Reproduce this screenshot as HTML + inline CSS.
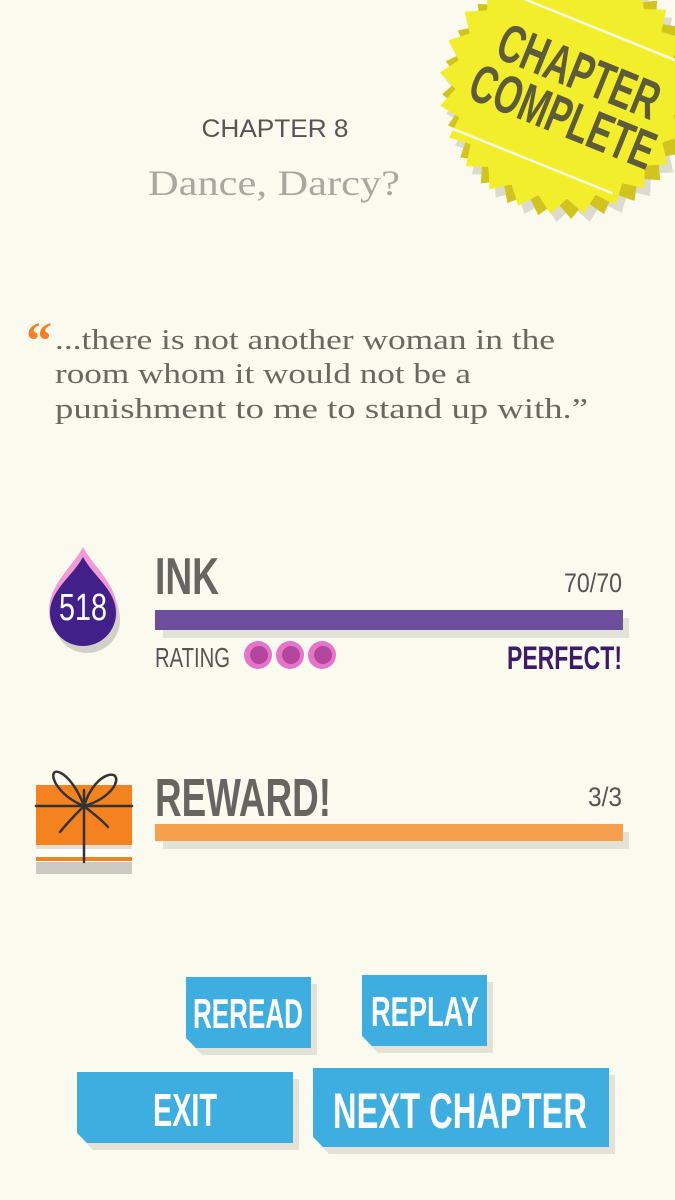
<!DOCTYPE html>
<html><head><meta charset="utf-8"><style>
html,body{margin:0;padding:0;background:#fbfaee;}
svg{display:block}
.c{font-family:"Liberation Sans Narrow","Liberation Sans",sans-serif;font-weight:bold}
.n{font-weight:normal}
.s{font-family:"Liberation Serif",serif}
</style></head><body>
<svg width="675" height="1200" viewBox="0 0 675 1200" xmlns="http://www.w3.org/2000/svg">
<rect width="675" height="1200" fill="#fbfaee"/>
<defs>
<g id="star"><circle cx="0" cy="0" r="111"/><polygon points="-15,-109 15,-109 0,-127"/></g>
<g id="spikes">
<use href="#star"/>
<use href="#star" transform="rotate(15)"/><use href="#star" transform="rotate(30)"/><use href="#star" transform="rotate(45)"/><use href="#star" transform="rotate(60)"/><use href="#star" transform="rotate(75)"/><use href="#star" transform="rotate(90)"/><use href="#star" transform="rotate(105)"/><use href="#star" transform="rotate(120)"/><use href="#star" transform="rotate(135)"/><use href="#star" transform="rotate(150)"/><use href="#star" transform="rotate(165)"/><use href="#star" transform="rotate(180)"/><use href="#star" transform="rotate(195)"/><use href="#star" transform="rotate(210)"/><use href="#star" transform="rotate(225)"/><use href="#star" transform="rotate(240)"/><use href="#star" transform="rotate(255)"/><use href="#star" transform="rotate(270)"/><use href="#star" transform="rotate(285)"/><use href="#star" transform="rotate(300)"/><use href="#star" transform="rotate(315)"/><use href="#star" transform="rotate(330)"/><use href="#star" transform="rotate(345)"/>
</g>
</defs>
<!-- badge -->
<g transform="translate(572,96) rotate(22)" fill="#dcdbd0"><use href="#spikes"/></g>
<g transform="translate(569,92) rotate(29)" fill="#d2c420"><use href="#spikes"/></g>
<g transform="translate(566,88) rotate(22)" fill="#f3ee2c"><use href="#spikes"/></g>
<g transform="translate(562,92) rotate(22)">
<line x1="-80" y1="-72" x2="95" y2="-72" stroke="#fffbe0" stroke-width="2.5"/>
<line x1="-95" y1="75" x2="85" y2="75" stroke="#fffbe0" stroke-width="2.5"/>
<text class="c" x="8" y="-7" text-anchor="middle" font-size="54" fill="#5d5b3a" textLength="170" lengthAdjust="spacingAndGlyphs">CHAPTER</text>
<text class="c" x="10" y="41" text-anchor="middle" font-size="54" fill="#5d5b3a" textLength="195" lengthAdjust="spacingAndGlyphs">COMPLETE</text>
</g>
<!-- titles -->
<text x="275" y="137" text-anchor="middle" font-family="Liberation Sans,sans-serif" font-size="25" fill="#555" textLength="147" lengthAdjust="spacingAndGlyphs">CHAPTER 8</text>
<text class="s" x="274" y="195" text-anchor="middle" font-size="36" fill="#a9a8a0" textLength="252" lengthAdjust="spacingAndGlyphs">Dance, Darcy?</text>
<!-- quote -->
<text class="s" x="26" y="358" font-size="52" font-weight="bold" fill="#f0822a">“</text>
<g class="s" font-size="29" fill="#6a6860">
<text x="55" y="349" textLength="500" lengthAdjust="spacingAndGlyphs">...there is not another woman in the</text>
<text x="55" y="383" textLength="416" lengthAdjust="spacingAndGlyphs">room whom it would not be a</text>
<text x="55" y="418" textLength="533" lengthAdjust="spacingAndGlyphs">punishment to me to stand up with.”</text>
</g>
<!-- ink drop -->
<path d="M87,556 C99,578 120,592 120,620 A33,33 0 0 1 54,620 C54,592 75,578 87,556Z" fill="#d2d1c8"/>
<path d="M83,547 C95,569 117,584 117,611 A34,34 0 0 1 49,611 C49,584 71,569 83,547Z" fill="#f39ad6"/>
<path d="M83,557 C94,577 116,590 116,613 A33,33 0 0 1 50,613 C50,590 72,577 83,557Z" fill="#42208a"/>
<text class="c n" x="83" y="620" text-anchor="middle" font-size="38" fill="#fff" textLength="48" lengthAdjust="spacingAndGlyphs">518</text>
<!-- INK -->
<text class="c" x="155" y="594" font-size="52" fill="#66655f" textLength="64" lengthAdjust="spacingAndGlyphs">INK</text>
<text class="c n" x="622" y="592" text-anchor="end" font-size="27" fill="#555" textLength="58" lengthAdjust="spacingAndGlyphs">70/70</text>
<rect x="163" y="618" width="466" height="20" fill="#e3e2d6"/>
<rect x="155" y="610" width="468" height="20" fill="#6c4e9b"/>
<text class="c n" x="155" y="667" font-size="28" fill="#555" textLength="75" lengthAdjust="spacingAndGlyphs">RATING</text>
<g fill="#e575c8"><circle cx="258" cy="655" r="14"/><circle cx="290" cy="655" r="14"/><circle cx="322" cy="655" r="14"/></g>
<g fill="#b5469f"><circle cx="259" cy="655" r="9"/><circle cx="291" cy="655" r="9"/><circle cx="323" cy="655" r="9"/></g>
<text class="c" x="622" y="669" text-anchor="end" font-size="32" fill="#3b1c6b" textLength="115" lengthAdjust="spacingAndGlyphs">PERFECT!</text>
<!-- gift -->
<rect x="36" y="845" width="96" height="29" fill="#fff"/>
<rect x="36" y="845" width="96" height="4" fill="#e2e0d4"/>
<rect x="36" y="857" width="96" height="4" fill="#f4821f"/>
<rect x="36" y="862" width="96" height="12" fill="#cbcac0"/>
<rect x="36" y="785" width="96" height="60" fill="#f4821f"/>
<g stroke="#333" stroke-width="2.5" fill="none" stroke-linecap="round">
<line x1="84" y1="790" x2="84" y2="862"/>
<line x1="36" y1="806" x2="132" y2="806"/>
<path d="M84,806 C70,768 45,763 56,784 C63,795 74,802 84,806"/>
<path d="M84,806 C96,768 126,768 113,788 C106,797 95,803 84,806"/>
<path d="M84,806 C75,815 68,822 60,832"/>
<path d="M84,806 C95,815 102,820 108,827"/>
</g>
<!-- reward -->
<text class="c" x="155" y="816" font-size="54" fill="#66655f" textLength="176" lengthAdjust="spacingAndGlyphs">REWARD!</text>
<text class="c n" x="622" y="806" text-anchor="end" font-size="27" fill="#555" textLength="34" lengthAdjust="spacingAndGlyphs">3/3</text>
<rect x="163" y="832" width="466" height="17" fill="#e3e2d6"/>
<rect x="155" y="824" width="468" height="17" fill="#f69f4c"/>
<!-- buttons -->
<g fill="#e4e2d6">
<polygon points="192,984 317,984 317,1055 202,1055 192,1045"/>
<polygon points="368,982 493,982 493,1053 378,1053 368,1043"/>
<polygon points="83,1079 299,1079 299,1150 93,1150 83,1140"/>
<polygon points="319,1075 615,1075 615,1154 329,1154 319,1144"/>
</g>
<g fill="#3eade0">
<polygon points="186,977 311,977 311,1048 196,1048 186,1038"/>
<polygon points="362,975 487,975 487,1046 372,1046 362,1036"/>
<polygon points="77,1072 293,1072 293,1143 87,1143 77,1133"/>
<polygon points="313,1068 609,1068 609,1147 323,1147 313,1137"/>
</g>
<g class="c" fill="#fff" text-anchor="middle">
<text x="248" y="1028" font-size="42" textLength="110" lengthAdjust="spacingAndGlyphs">REREAD</text>
<text x="425" y="1026" font-size="42" textLength="108" lengthAdjust="spacingAndGlyphs">REPLAY</text>
<text x="185" y="1126" font-size="46" textLength="64" lengthAdjust="spacingAndGlyphs">EXIT</text>
<text x="460" y="1128" font-size="50" textLength="254" lengthAdjust="spacingAndGlyphs">NEXT CHAPTER</text>
</g>
</svg>
</body></html>
